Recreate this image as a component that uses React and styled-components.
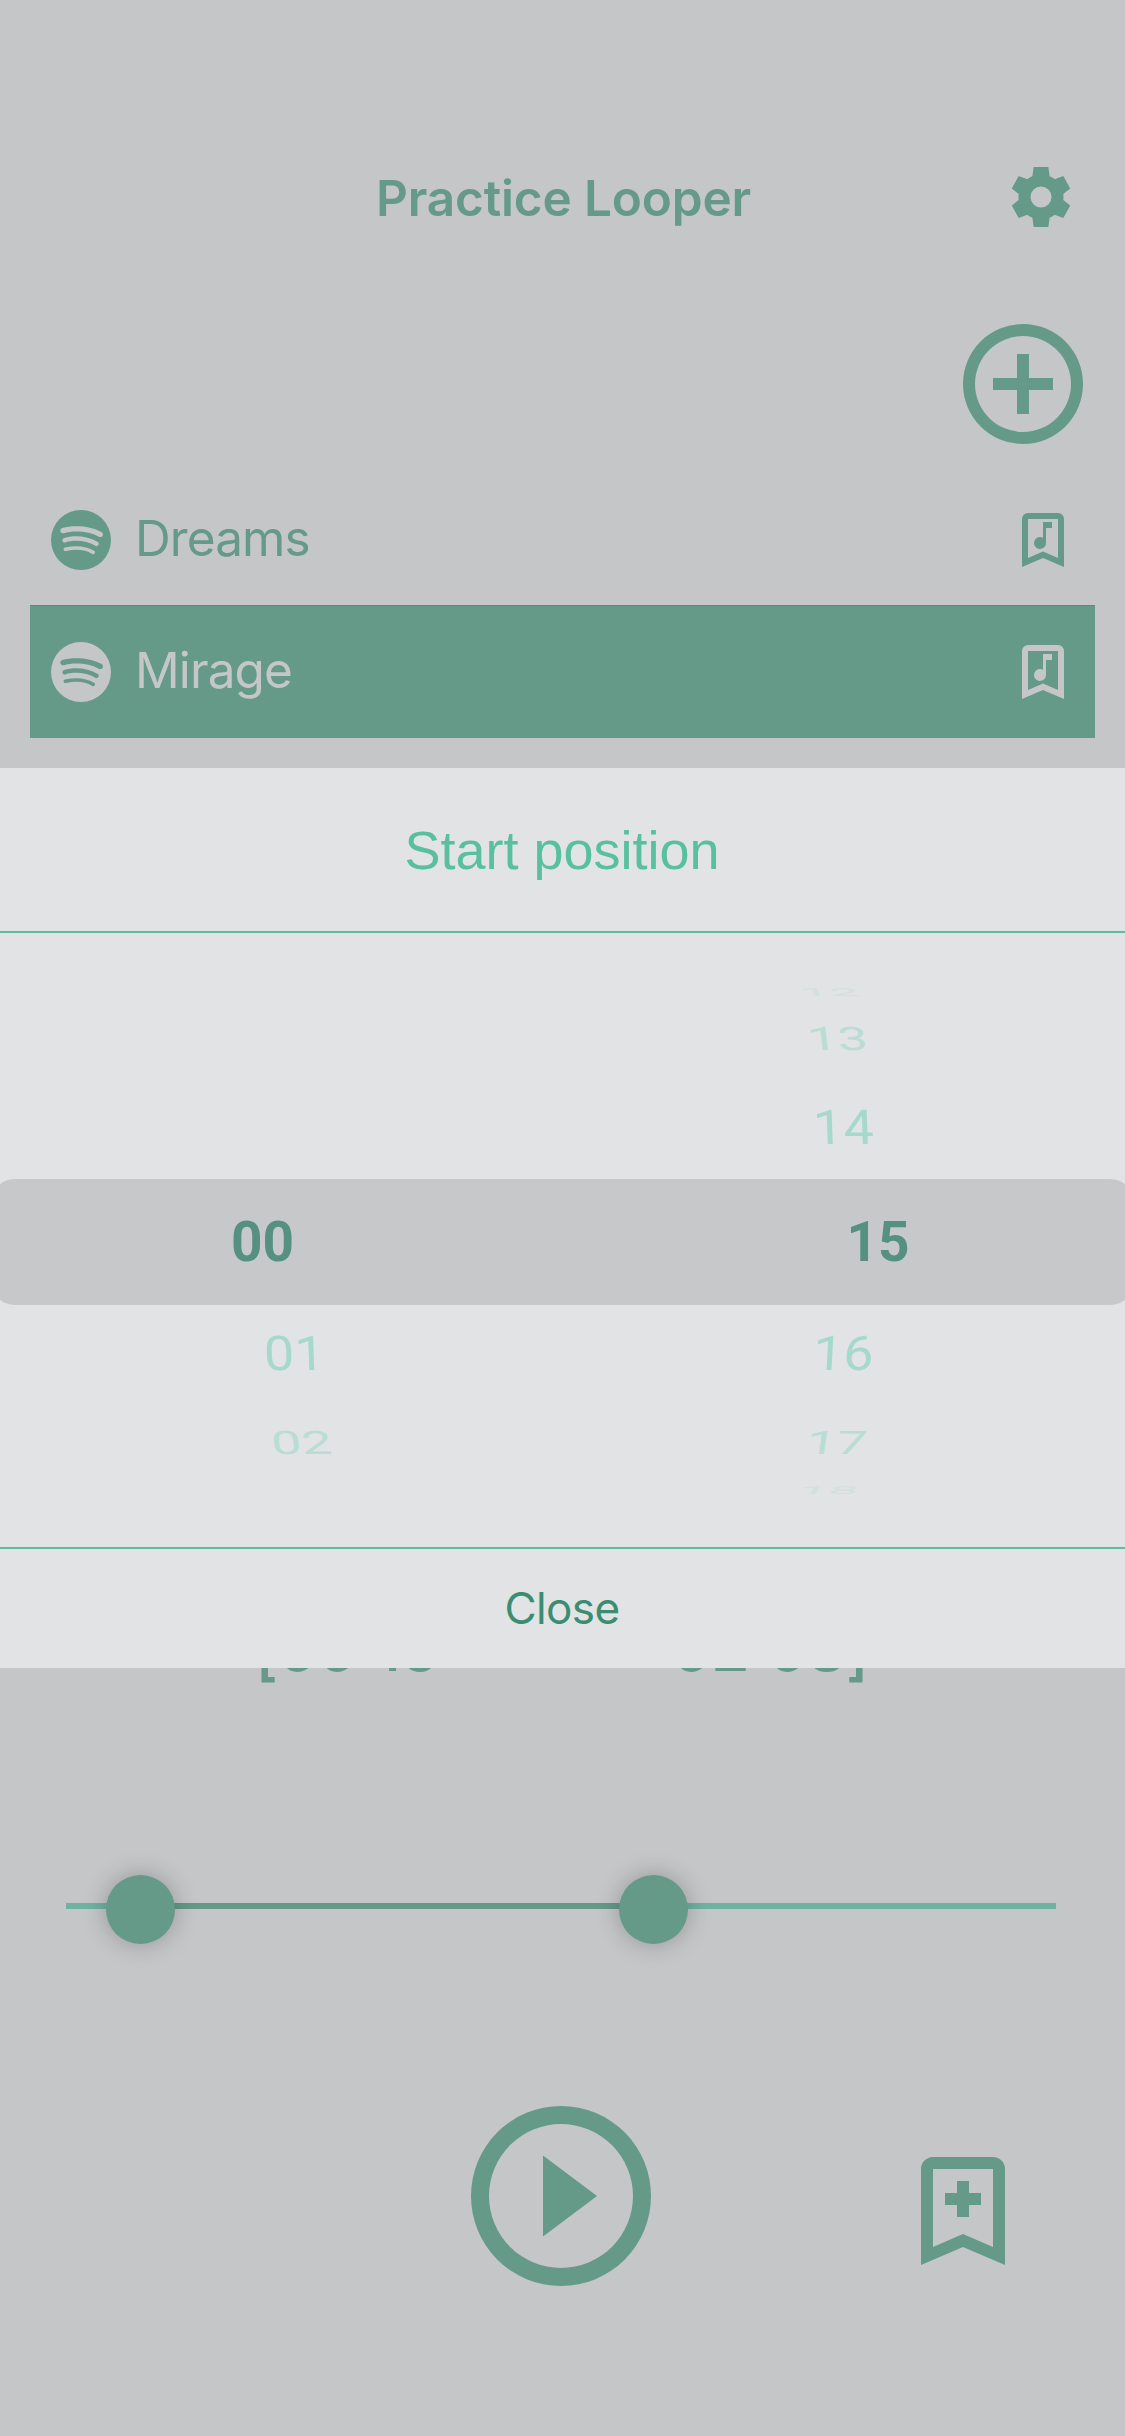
import React from "react";
import styled, { createGlobalStyle } from "styled-components";

const GREEN = "#659988";
const SURFACE = "#c5c6c8";
const SANS = `Inter, "Liberation Sans", sans-serif`;
const ARIAL = `"Liberation Sans", Arial, sans-serif`;

const Global = createGlobalStyle`
  *, *::before, *::after { box-sizing: border-box; }
  body { margin: 0; background: ${SURFACE}; }
`;

const Screen = styled.main`
  position: relative;
  width: 1125px;
  height: 2436px;
  overflow: hidden;
  display: flex;
  flex-direction: column;
  background: ${SURFACE};
  color: ${GREEN};
  font-family: ${SANS};
`;

const Header = styled.header`
  display: grid;
  grid-template-columns: 120px 1fr 120px;
  align-items: center;
  height: 132px;
  margin-top: 131px;
  flex: none;
`;

const Title = styled.h1`
  grid-column: 2;
  margin: 0;
  padding: 2px 0 0 2px;
  text-align: center;
  font-size: 49.5px;
  line-height: 60px;
  font-weight: 600;
  letter-spacing: -0.15px;
`;

const IconButton = styled.button`
  display: flex;
  padding: 0;
  border: 0;
  background: none;
  color: inherit;
`;

const Toolbar = styled.div`
  display: flex;
  justify-content: flex-end;
  padding: 49px 30px 18px 0;
  flex: none;
`;

const SongList = styled.ul`
  margin: 0;
  padding: 0 30px;
  list-style: none;
  flex: none;
`;

const SongRow = styled.li`
  display: flex;
  align-items: center;
  height: ${(p) => (p.$selected ? 133 : 131)}px;
  padding: 0 16px 0 15px;
  border-top: ${(p) => (p.$selected ? "1px solid #6f7f7a" : "0")};
  background: ${(p) => (p.$selected ? GREEN : "transparent")};
  color: ${(p) => (p.$selected ? SURFACE : GREEN)};
`;

const SongName = styled.span`
  flex: 1;
  margin-left: 18px;
  padding-bottom: 4px;
  font-size: 49.5px;
  line-height: 60px;
  letter-spacing: -0.9px;
`;

const Times = styled.div`
  display: flex;
  justify-content: space-between;
  margin-top: 872px;
  padding: 0 257px 0 255px;
  font-size: 63px;
  line-height: 76px;
  font-weight: 500;
  letter-spacing: -0.9px;
  flex: none;
`;

const Colon = styled.span`
  display: inline-block;
  transform: translateY(-6px);
`;

const Bracket = styled.span`
  display: inline-block;
  transform: translateY(3px);
`;

const Slider = styled.div`
  position: relative;
  height: 69px;
  margin: 189px 69px 0 66px;
  display: flex;
  align-items: center;
  flex: none;
`;

const Track = styled.div`
  width: 100%;
  height: 6px;
  margin-bottom: 7px;
  background: linear-gradient(to right, #70b2a2 74px, ${GREEN} 74px, ${GREEN} 587px, #70b2a2 587px);
`;

const Thumb = styled.div`
  position: absolute;
  top: 0;
  left: ${(p) => p.$x}px;
  width: 69px;
  height: 69px;
  border-radius: 50%;
  background: ${GREEN};
  box-shadow: 0 0 24px rgba(0, 0, 0, 0.25);
`;

const Controls = styled.div`
  display: grid;
  grid-template-columns: 453px 216px 222px 144px;
  align-items: center;
  margin-top: 144px;
  flex: none;
`;

const PlayButton = styled(IconButton)`
  grid-column: 2;
`;

const AddBookmark = styled(IconButton)`
  grid-column: 4;
  margin-top: 30px;
`;

const Sheet = styled.section`
  position: absolute;
  top: 768px;
  left: 0;
  width: 100%;
  height: 900px;
  display: flex;
  flex-direction: column;
  background: #e1e3e5;
  font-family: ${ARIAL};
`;

const SheetTitle = styled.h2`
  margin: 0;
  height: 165px;
  padding-right: 1px;
  border-bottom: 2px solid #58c09f;
  color: #58c09f;
  text-align: center;
  font-size: 54px;
  line-height: 164px;
  font-weight: 400;
`;

const Picker = styled.div`
  position: relative;
  display: grid;
  grid-template-columns: 1fr 1fr;
  height: 614px;
  padding-top: 52px;
  overflow: hidden;
`;

const Band = styled.div`
  position: absolute;
  top: 246px;
  left: -9px;
  right: -9px;
  height: 126px;
  border-radius: 24px;
  background: #c7c8ca;
`;

const Wheel = styled.div`
  position: relative;
  display: flex;
  flex-direction: column;
`;

const STEPS = {
  0: { height: 126, scale: 1, color: "#559081" },
  1: { height: 100, scale: 0.89, color: "#a5d9cc" },
  2: { height: 78, scale: 0.6, color: "#b9ddd3" },
  3: { height: 16, scale: 0.2, color: "#d2e0de" },
};

const WheelItem = styled.div`
  display: flex;
  align-items: center;
  height: ${(p) => STEPS[p.$step].height}px;
  padding-left: ${(p) => p.$inset}px;
  padding-bottom: ${(p) => (p.$step === 0 ? 0 : 2)}px;
  color: ${(p) => STEPS[p.$step].color};
  font-family: Roboto, ${ARIAL};
  font-size: ${(p) => (p.$step === 0 ? 55 : 54)}px;
  line-height: 1;
  font-weight: ${(p) => (p.$step === 0 ? 700 : 400)};

  span {
    transform: skewX(${(p) => p.$lean}deg) scaleY(${(p) => STEPS[p.$step].scale});
  }
`;

const CloseButton = styled.button`
  height: 121px;
  padding: 0 1px 1px 0;
  border: 0;
  border-top: 2px solid #58c09f;
  background: none;
  color: #3b8d72;
  font-family: ${SANS};
  font-size: 44px;
  letter-spacing: -0.6px;
`;

const Svg = ({ size, children }) => (
  <svg width={size} height={size} viewBox="0 0 24 24" fill="currentColor" aria-hidden="true">
    {children}
  </svg>
);

const BOOKMARK = "M17 18l-5-2.18L7 18V5h10m0-2H7a2 2 0 0 0-2 2v16l7-3 7 3V5a2 2 0 0 0-2-2z";

const GearIcon = () => (
  <Svg size={72}>
    <path d="M12 15.5A3.5 3.5 0 0 1 8.5 12 3.5 3.5 0 0 1 12 8.5a3.5 3.5 0 0 1 3.5 3.5 3.5 3.5 0 0 1-3.5 3.5m7.43-2.53c.04-.32.07-.64.07-.97s-.03-.66-.07-1l2.31-1.83-2.3-4.16-2.88 1.04c-.52-.39-1.06-.73-1.69-.98L14.45 2h-4.9l-.42 3.07c-.63.25-1.17.59-1.69.98L4.56 5.01 2.26 9.17 4.57 11c-.04.34-.07.67-.07 1s.03.65.07.97l-2.31 1.86 2.3 4.16 2.88-1.05c.52.4 1.06.74 1.69.99L9.55 22h4.9l.42-3.07c.63-.26 1.17-.59 1.69-.99l2.88 1.05 2.3-4.16z" />
  </Svg>
);

const AddIcon = () => (
  <Svg size={144}>
    <path d="M12 20a8 8 0 1 1 0-16 8 8 0 0 1 0 16m0-18a10 10 0 1 0 0 20 10 10 0 0 0 0-20m1 5h-2v4H7v2h4v4h2v-4h4v-2h-4z" />
  </Svg>
);

const SpotifyIcon = () => (
  <Svg size={72}>
    <path d="M17.9 10.9C14.7 9 9.35 8.8 6.3 9.75c-.5.15-1-.15-1.15-.6-.15-.5.15-1 .6-1.15 3.55-1.05 9.4-.85 13.1 1.35.45.25.6.85.35 1.3-.25.35-.85.5-1.3.25m-.1 2.8c-.25.35-.7.5-1.05.25-2.7-1.65-6.8-2.15-9.95-1.15-.4.1-.85-.1-.95-.5s.1-.85.5-.95c3.65-1.1 8.15-.55 11.25 1.35.3.15.45.65.2 1m-1.2 2.75c-.2.3-.55.4-.85.2-2.35-1.45-5.3-1.75-8.8-.95-.35.1-.65-.15-.75-.45-.1-.35.15-.65.45-.75 3.8-.85 7.1-.5 9.7 1.1.35.15.4.55.25.85M12 2a10 10 0 1 0 0 20 10 10 0 0 0 0-20" />
  </Svg>
);

const BookmarkMusicIcon = () => (
  <Svg size={72}>
    <path d={BOOKMARK} />
    <path d="M12 6h3v2h-2v5a2 2 0 1 1-1-1.73z" />
  </Svg>
);

const BookmarkPlusIcon = () => (
  <Svg size={144}>
    <path d={BOOKMARK} />
    <path d="M11 7h2v2h2v2h-2v2h-2v-2H9V9h2z" />
  </Svg>
);

const PlayIcon = () => (
  <Svg size={216}>
    <path d="M12 20a8 8 0 1 1 0-16 8 8 0 0 1 0 16m0-18a10 10 0 1 0 0 20 10 10 0 0 0 0-20m-2 14.5l6-4.5-6-4.5z" />
  </Svg>
);

const songs = [
  { name: "Dreams", selected: false },
  { name: "Mirage", selected: true },
];

const minutes = [
  { step: 3 },
  { step: 2 },
  { step: 1 },
  { text: "00", step: 0, inset: 231, lean: 0 },
  { text: "01", step: 1, inset: 264, lean: 2 },
  { text: "02", step: 2, inset: 271, lean: 6 },
];

const seconds = [
  { text: "12", step: 3, inset: 236, lean: 25 },
  { text: "13", step: 2, inset: 244, lean: 6 },
  { text: "14", step: 1, inset: 250, lean: 2 },
  { text: "15", step: 0, inset: 284, lean: 0 },
  { text: "16", step: 1, inset: 250, lean: -3 },
  { text: "17", step: 2, inset: 243, lean: -8 },
  { text: "18", step: 3, inset: 235, lean: -25 },
];

const renderItems = (items) =>
  items.map(({ text, step, inset = 0, lean = 0 }, i) => (
    <WheelItem key={i} $step={step} $inset={inset} $lean={lean}>
      {text && <span>{text}</span>}
    </WheelItem>
  ));

export default function App() {
  return (
    <Screen>
      <Global />
      <Header>
        <Title>Practice Looper</Title>
        <IconButton aria-label="Settings">
          <GearIcon />
        </IconButton>
      </Header>
      <Toolbar>
        <IconButton aria-label="Add song">
          <AddIcon />
        </IconButton>
      </Toolbar>
      <SongList>
        {songs.map((song) => (
          <SongRow key={song.name} $selected={song.selected}>
            <SpotifyIcon />
            <SongName>{song.name}</SongName>
            <BookmarkMusicIcon />
          </SongRow>
        ))}
      </SongList>
      <Times>
        <span>
          <Bracket>[</Bracket>00<Colon>:</Colon>15
        </span>
        <span>
          02<Colon>:</Colon>08<Bracket>]</Bracket>
        </span>
      </Times>
      <Slider>
        <Track />
        <Thumb $x={39.5} />
        <Thumb $x={552.5} />
      </Slider>
      <Controls>
        <PlayButton aria-label="Play">
          <PlayIcon />
        </PlayButton>
        <AddBookmark aria-label="Add bookmark">
          <BookmarkPlusIcon />
        </AddBookmark>
      </Controls>
      <Sheet>
        <SheetTitle>Start position</SheetTitle>
        <Picker>
          <Band />
          <Wheel>{renderItems(minutes)}</Wheel>
          <Wheel>{renderItems(seconds)}</Wheel>
        </Picker>
        <CloseButton>Close</CloseButton>
      </Sheet>
    </Screen>
  );
}
